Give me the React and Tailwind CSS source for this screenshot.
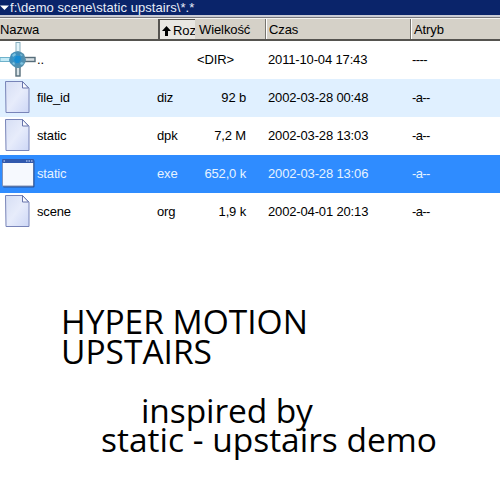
import React from 'react';

const files = [
  { icon: 'up', name: '..', ext: '', size: '<DIR>', date: '2011-10-04 17:43', attr: '----', row: 'bg-white' },
  { icon: 'file', name: 'file_id', ext: 'diz', size: '92 b', date: '2002-03-28 00:48', attr: '-a--', row: 'bg-[#e0f0ff]' },
  { icon: 'file', name: 'static', ext: 'dpk', size: '7,2 M', date: '2002-03-28 13:03', attr: '-a--', row: 'bg-white' },
  { icon: 'app', name: 'static', ext: 'exe', size: '652,0 k', date: '2002-03-28 13:06', attr: '-a--', row: 'bg-[#2f8cff] text-[#e6f3ff]' },
  { icon: 'file', name: 'scene', ext: 'org', size: '1,9 k', date: '2002-04-01 20:13', attr: '-a--', row: 'bg-white' },
];

function UpIcon() {
  return (
    <svg width="36" height="38" viewBox="0 0 36 38">
      <defs>
        <radialGradient id="hub" cx="40%" cy="45%">
          <stop offset="0" stopColor="#2a9bd8" />
          <stop offset="0.55" stopColor="#3f8fbd" />
          <stop offset="1" stopColor="#5590ad" />
        </radialGradient>
      </defs>
      <rect x="16" y="1.5" width="4" height="10" fill="#e4f5fb" stroke="#88aebe" />
      <rect x="0" y="16.5" width="11" height="4" fill="#c3eaf6" stroke="#6fb2cb" />
      <rect x="24" y="16.5" width="11" height="4" fill="#d5dee3" stroke="#566d7a" strokeWidth="1.4" />
      <rect x="16" y="25" width="4" height="10" fill="#d8e3e8" stroke="#566d7a" strokeWidth="1.4" />
      <path d="M18 10l3 1 3 2 1 3 1 3-1 3-2 3-3 2h-4l-3-2-3-3-1-3 1-3 1-3 3-2z" fill="url(#hub)" />
      <path d="M12 14l3-2 1 2-3 2zM20 13l3 1-2 1zM12 22l2-1 1 2-1 1zM21 21l3 1-2 2-2-1z" fill="#7fc3e0" />
      <path d="M16 15h4l1 3-2 4h-3l-2-3z" fill="#178cd2" />
    </svg>
  );
}

function FileIcon() {
  return (
    <svg width="36" height="38" viewBox="0 0 36 38">
      <defs>
        <linearGradient id="paper" x1="0" y1="0" x2="1" y2="1">
          <stop offset="0" stopColor="#d6def4" />
          <stop offset="0.5" stopColor="#e7ecfb" />
          <stop offset="1" stopColor="#cdd7f6" />
        </linearGradient>
      </defs>
      <path d="M5.5 2.5h17l6.500 6.500v24.500h-23z" fill="url(#paper)" stroke="#7884b8" />
      <path d="M22.500 2.500v6.500h6z" fill="#fbfcff" stroke="#6875ac" />
    </svg>
  );
}

function AppIcon() {
  return (
    <svg width="36" height="38" viewBox="0 0 36 38">
      <rect x="3" y="5" width="31.500" height="27.500" rx="1" fill="#27539a" />
      <rect x="2" y="4" width="31.500" height="27.500" rx="1" fill="#8293b8" />
      <rect x="2" y="4" width="32" height="4" rx="1" fill="#3159ad" />
      <rect x="3" y="8" width="30" height="22.500" fill="#f6f9fe" />
      <path d="M3.500 6h1.500M26 6h1.500M28.500 6h1.500M31 6h1.500" stroke="#d6e4ff" />
    </svg>
  );
}

function RowIcon({ type }) {
  if (type === 'up') return <UpIcon />;
  if (type === 'app') return <AppIcon />;
  return <FileIcon />;
}

function Header() {
  return (
    <div className="flex h-[23px] border-t border-b-2 border-t-[#f4f3f0] border-b-[#55534f] bg-[#d5d1c8] text-[13px] leading-[21px] tracking-[-0.1px]">
      <div className="w-[158px]">Nazwa</div>
      <div className="flex w-[37px] items-center overflow-hidden border-t border-l-2 border-[#55534f] bg-[#e9e7e2] pl-[2px]">
        <svg width="9" height="10" viewBox="0 0 9 10" className="mt-[3px] mr-[2px] shrink-0">
          <path d="M4.500 0L9 5H6v5H3V5H0z" />
        </svg>
        <span className="pt-px">Roz</span>
      </div>
      <div className="w-[71px] border-r border-[#77756f] pl-[4px]">Wielkość</div>
      <div className="w-[145px] border-r border-l border-r-[#77756f] border-l-white pl-[2px]">Czas</div>
      <div className="flex-1 border-l border-white pl-[2px]">Atryb</div>
    </div>
  );
}

export default function App() {
  return (
    <div className="h-[500px] w-[500px] overflow-hidden bg-white font-['Liberation_Sans',sans-serif] text-black">
      <div className="flex h-[15px] items-center bg-[#0a246a] text-[13px] leading-[15px] tracking-[0.07px] text-[#e8edf8]">
        <svg width="10" height="15" viewBox="0 0 10 15" className="shrink-0">
          <path d="M0 5.500h9L4.500 10z" fill="#fff" />
        </svg>
        <span className="whitespace-pre">{'f:\\demo scene\\static upstairs\\*.*'}</span>
      </div>
      <div className="h-[3px] border-b border-[#77777b] bg-[#c9cbd5]" />
      <Header />

      {files.map((file, i) => (
        <div
          key={i}
          className={`flex h-[38px] items-center text-[13px] tracking-[-0.15px] whitespace-pre ${file.row}`}
        >
          <div className="w-[37px] shrink-0">
            <RowIcon type={file.icon} />
          </div>
          <div className="w-[120px]">{file.name}</div>
          <div className="w-[36px]">{file.ext}</div>
          <div className={file.icon === 'up' ? 'w-[75px] pl-[4px]' : 'w-[53px] mr-[22px] text-right'}>{file.size}</div>
          <div className="w-[144px]">{file.date}</div>
          <div className="tracking-[-0.6px]">{file.attr}</div>
        </div>
      ))}

      <div className="pt-[76px] font-['Open_Sans',sans-serif] text-[33.5px] leading-[29px] whitespace-pre">
        <div className="pl-[61px]">HYPER MOTION</div>
        <div className="pt-px pl-[61px]">UPSTAIRS</div>
        <div className="pt-[30px] pl-[141px] tracking-[-0.1px]">inspired by</div>
        <div className="pl-[101px]">static - upstairs demo</div>
      </div>
    </div>
  );
}
